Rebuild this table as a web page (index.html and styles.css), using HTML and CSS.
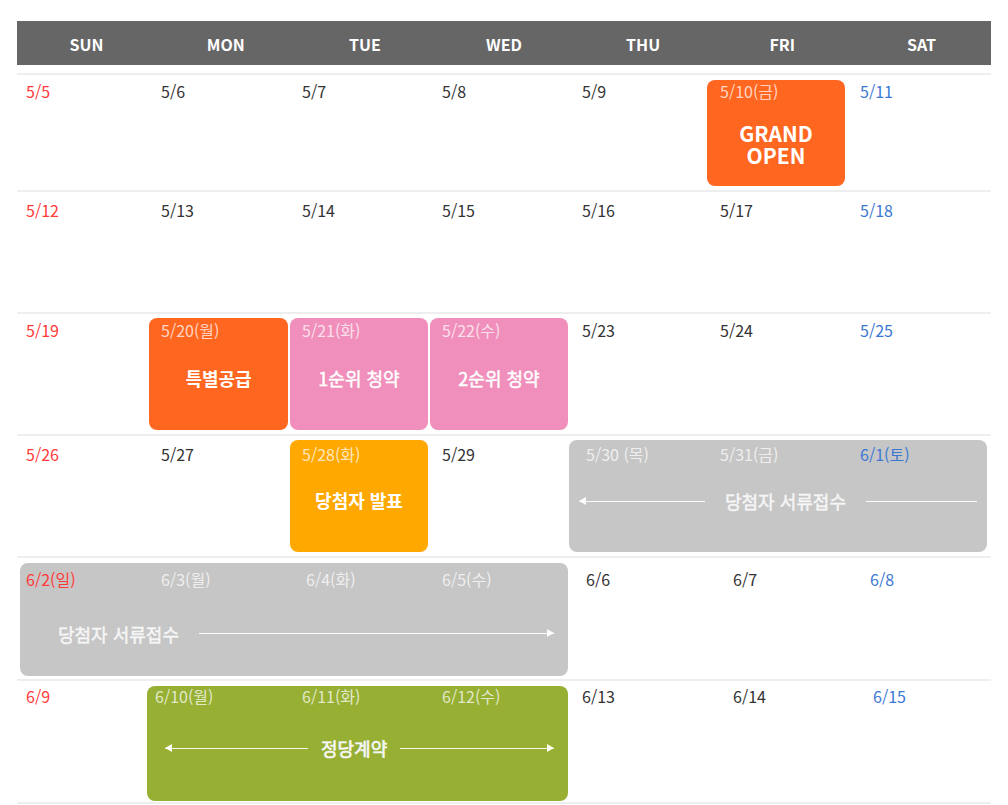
FILE: index.html
```html
<!DOCTYPE html>
<html lang="ko">
<head>
<meta charset="utf-8">
<title>분양 일정</title>
<link rel="stylesheet" href="styles.css">
</head>
<body>
<div class="cal">
  <div class="head">
    <span>SUN</span><span>MON</span><span>TUE</span><span>WED</span><span>THU</span><span>FRI</span><span>SAT</span>
  </div>

  <div class="week w1">
    <div class="ev orange col6 t-open"><span class="title big">GRAND<br>OPEN</span></div>
    <span class="d sun">5/5</span><span class="d">5/6</span><span class="d">5/7</span><span class="d">5/8</span><span class="d">5/9</span><span class="d in">5/10(금)</span><span class="d sat">5/11</span>
  </div>

  <div class="week w2">
    <span class="d sun">5/12</span><span class="d">5/13</span><span class="d">5/14</span><span class="d">5/15</span><span class="d">5/16</span><span class="d">5/17</span><span class="d sat">5/18</span>
  </div>

  <div class="week w3">
    <div class="ev orange col2 t-mid"><span class="title bold">특별공급</span></div>
    <div class="ev pink col3 t-mid"><span class="title">1순위 청약</span></div>
    <div class="ev pink col4 t-mid"><span class="title">2순위 청약</span></div>
    <span class="d sun">5/19</span><span class="d in">5/20(월)</span><span class="d in">5/21(화)</span><span class="d in">5/22(수)</span><span class="d">5/23</span><span class="d">5/24</span><span class="d sat">5/25</span>
  </div>

  <div class="week w4">
    <div class="ev amber col3 t-mid"><span class="title bold">당첨자 발표</span></div>
    <div class="ev grey col5-8 row-arrow r4">
      <span class="line to-left fixed-l"></span>
      <span class="title">당첨자 서류접수</span>
      <span class="line grow"></span>
    </div>
    <span class="d sun">5/26</span><span class="d">5/27</span><span class="d in">5/28(화)</span><span class="d">5/29</span><span class="d in ml">5/30 (목)</span><span class="d in">5/31(금)</span><span class="d sat">6/1(토)</span>
  </div>

  <div class="week w5">
    <div class="ev grey col1-5 row-arrow r5">
      <span class="title">당첨자 서류접수</span>
      <span class="line to-right grow"></span>
    </div>
    <span class="d sun">6/2(일)</span><span class="d in">6/3(월)</span><span class="d in ml">6/4(화)</span><span class="d in">6/5(수)</span><span class="d ml">6/6</span><span class="d far">6/7</span><span class="d sat far2">6/8</span>
  </div>

  <div class="week w6">
    <div class="ev green col2-5 row-arrow r6">
      <span class="line to-left fixed-g"></span>
      <span class="title semi">정당계약</span>
      <span class="line to-right grow"></span>
    </div>
    <span class="d sun">6/9</span><span class="d in mr">6/10(월)</span><span class="d in">6/11(화)</span><span class="d in">6/12(수)</span><span class="d">6/13</span><span class="d far">6/14</span><span class="d sat far">6/15</span>
  </div>
</div>
</body>
</html>
```

FILE: styles.css
```css
* { box-sizing: border-box; }

html, body {
  margin: 0;
  padding: 0;
  background: #ffffff;
}

body {
  font-family: "Noto Sans CJK KR", "Noto Sans", sans-serif;
  color: #333333;
}

.cal {
  width: 974px;
  margin: 21px 17px 0 17px;
}

.head {
  display: grid;
  grid-template-columns: repeat(7, 1fr);
  height: 44px;
  background: #666666;
  margin-bottom: 8px;
}

.head span {
  display: flex;
  align-items: center;
  justify-content: center;
  color: #ffffff;
  font-weight: 700;
  font-size: 16px;
  padding-top: 2px;
}

.week {
  display: grid;
  grid-template-columns: 131px 141px 140px 140px 138px 140px 144px;
  grid-template-rows: 120px;
  border-top: 2px solid #eeeeee;
}

.week.w1 { grid-template-rows: 115px; }
.week.w5 { grid-template-rows: 121px; }
.week.w6 { grid-template-rows: 121px; border-bottom: 2px solid #eeeeee; }

.week > * { grid-row: 1; }

.week > span:nth-of-type(1) { grid-column: 1; }
.week > span:nth-of-type(2) { grid-column: 2; }
.week > span:nth-of-type(3) { grid-column: 3; }
.week > span:nth-of-type(4) { grid-column: 4; }
.week > span:nth-of-type(5) { grid-column: 5; }
.week > span:nth-of-type(6) { grid-column: 6; }
.week > span:nth-of-type(7) { grid-column: 7; }

.d {
  align-self: start;
  font-size: 16px;
  line-height: 24px;
  padding: 4px 0 0 13px;
  color: #333333;
  white-space: nowrap;
}

.w2 .d { padding-top: 6px; }
.w4 .d { padding-top: 6px; }
.w5 .d { padding-top: 9px; }
.w6 .d { padding-top: 3px; }

.d.sun { color: #ff3a3a; padding-left: 9px; }
.d.sat { color: #3b78d4; }
.d.in { color: rgba(255, 255, 255, 0.74); }
.d.ml { padding-left: 17px; }
.d.mr { padding-left: 7px; }
.d.far { padding-left: 26px; }
.d.far2 { padding-left: 23px; }

/* event boxes */
.ev {
  margin: 4px 1px;
  border-radius: 8px;
  color: #ffffff;
  display: flex;
  flex-direction: column;
  align-items: center;
  justify-content: center;
}

.orange { background: #ff6620; }
.pink { background: #f08fbb; }
.amber { background: #ffa800; }
.grey { background: #c6c6c6; }
.green { background: #97b034; }

.col2 { grid-column: 2; }
.col3 { grid-column: 3; }
.col4 { grid-column: 4; }
.col6 { grid-column: 6; }
.col5-8 { grid-column: 5 / 8; }
.col1-5 { grid-column: 1 / 5; }
.col2-5 { grid-column: 2 / 5; }

.w1 .ev { margin-top: 5px; }

.t-open { padding-top: 21px; margin-left: 0; margin-right: 2px; }
.t-mid { padding-top: 8px; }

.title {
  font-size: 18px;
  line-height: 26px;
  font-weight: 400;
  white-space: nowrap;
  -webkit-text-stroke: 0.45px currentColor;
}

.title.bold { font-weight: 700; -webkit-text-stroke: 0; }
.title.semi { -webkit-text-stroke: 0.7px currentColor; }

.title.big {
  font-size: 21px;
  line-height: 22px;
  font-weight: 700;
  text-align: center;
  -webkit-text-stroke: 0;
}

/* arrow boxes */
.row-arrow {
  flex-direction: row;
  justify-content: flex-start;
}

.row-arrow .title { color: #f6f6f6; }

.r4 { margin: 4px 4px 4px 0; padding: 10px 10px 0 10px; gap: 20px; }
.r5 { margin: 5px 1px 3px 3px; padding: 28px 14px 0 38px; gap: 20px; }
.r6 { margin: 5px 1px 1px -1px; padding: 9px 14px 0 18px; gap: 13px; }

.line {
  position: relative;
  height: 1px;
  background: rgba(255, 255, 255, 0.9);
}

.line.grow { flex: 1; }
.line.fixed-l { width: 126px; }
.line.fixed-g { width: 143px; }

.line.to-left::before,
.line.to-right::after {
  content: "";
  position: absolute;
  top: -4px;
  width: 0;
  height: 0;
  border-top: 4.5px solid transparent;
  border-bottom: 4.5px solid transparent;
}

.line.to-left::before {
  left: 0;
  border-right: 7px solid rgba(255, 255, 255, 0.95);
}

.line.to-right::after {
  right: 0;
  border-left: 7px solid rgba(255, 255, 255, 0.95);
}
```
